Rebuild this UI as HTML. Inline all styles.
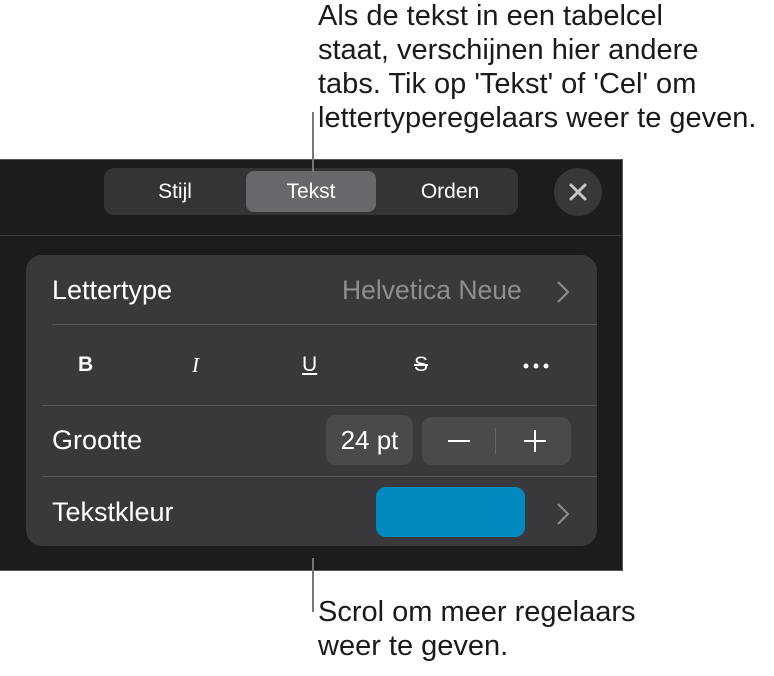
<!DOCTYPE html>
<html><head><style>
body{margin:0;width:774px;height:676px;background:#fff;position:relative;font-family:"Liberation Sans",sans-serif;overflow:hidden}
.a{position:absolute}
.call{color:#1a1a1a;font-size:29px;line-height:34px;left:318px;white-space:nowrap}
.panel{left:0;top:159px;width:623px;height:412px;background:#1c1c1e;border-top:1px solid #555;border-right:1px solid #555;border-bottom:1px solid #555;box-sizing:border-box}
.w{color:#fff}
.card{left:26px;top:255px;width:571px;height:291px;background:#39393c;border-radius:16px}
.sep{height:1px;background:#555558}
.lbl{font-size:27px;color:#fff}
</style></head><body>
<div class="a call" style="top:-1px">Als de tekst in een tabelcel<br>staat, verschijnen hier andere<br>tabs. Tik op 'Tekst' of 'Cel' om<br>lettertyperegelaars weer te geven.</div>
<div class="a" style="left:312px;top:112px;width:2px;height:60px;background:#777"></div>
<div class="a panel"></div>
<div class="a" style="left:0;top:235px;width:622px;height:1px;background:#3a3a3c"></div>
<div class="a" style="left:104px;top:168px;width:414px;height:47px;background:#343437;border-radius:10px"></div>
<div class="a" style="left:246px;top:171px;width:130px;height:41px;background:#68686c;border-radius:8px"></div>
<div class="a w" style="left:104px;top:180px;width:142px;text-align:center;font-size:21px">Stijl</div>
<div class="a w" style="left:246px;top:180px;width:130px;text-align:center;font-size:21px">Tekst</div>
<div class="a w" style="left:376px;top:180px;width:148px;text-align:center;font-size:21px">Orden</div>
<div class="a" style="left:312px;top:150px;width:2px;height:22px;background:#777"></div>
<div class="a" style="left:554px;top:168px;width:48px;height:48px;border-radius:50%;background:#38383b"></div>
<svg class="a" style="left:568px;top:182px" width="20" height="20"><path d="M3 3L17 17M17 3L3 17" stroke="#c8c8cc" stroke-width="3" stroke-linecap="round"/></svg>
<div class="a card"></div>
<div class="a lbl" style="left:52px;top:275px">Lettertype</div>
<div class="a" style="left:342px;top:275px;font-size:26.5px;color:#8e8e92">Helvetica Neue</div>
<svg class="a" style="left:556px;top:280px" width="14" height="24"><path d="M2 2L12 12L2 22" stroke="#8e8e92" stroke-width="2" fill="none"/></svg>
<div class="a sep" style="left:52px;top:324px;width:545px"></div>
<div class="a" style="left:78px;top:353px;font-size:21px;font-weight:bold;color:#fff">B</div>
<div class="a" style="left:192px;top:353px;font-size:21px;font-style:italic;color:#fff;font-family:'Liberation Serif',serif">I</div>
<div class="a" style="left:302px;top:353px;font-size:21px;color:#fff;text-decoration:underline">U</div>
<div class="a" style="left:414px;top:353px;font-size:21px;color:#fff;text-decoration:line-through">S</div>
<svg class="a" style="left:522px;top:361px" width="30" height="10"><circle cx="4" cy="5" r="2.5" fill="#fff"/><circle cx="14" cy="5" r="2.5" fill="#fff"/><circle cx="24" cy="5" r="2.5" fill="#fff"/></svg>
<div class="a sep" style="left:42px;top:405px;width:555px"></div>
<div class="a lbl" style="left:52px;top:425px">Grootte</div>
<div class="a" style="left:326px;top:415px;width:87px;height:50px;background:#4a4a4d;border-radius:10px;color:#fff;font-size:26px;text-align:center;line-height:50px">24 pt</div>
<div class="a" style="left:422px;top:417px;width:149px;height:48px;background:#4a4a4d;border-radius:10px"></div>
<div class="a" style="left:495px;top:428px;width:1px;height:26px;background:#666"></div>
<div class="a" style="left:448px;top:440px;width:22px;height:2px;background:#fff"></div>
<div class="a" style="left:524px;top:440px;width:22px;height:2px;background:#fff"></div>
<div class="a" style="left:534px;top:430px;width:2px;height:22px;background:#fff"></div>
<div class="a sep" style="left:42px;top:476px;width:555px"></div>
<div class="a lbl" style="left:52px;top:497px">Tekstkleur</div>
<div class="a" style="left:376px;top:487px;width:149px;height:50px;background:#028abf;border-radius:10px"></div>
<svg class="a" style="left:556px;top:502px" width="14" height="24"><path d="M2 2L12 12L2 22" stroke="#8e8e92" stroke-width="2" fill="none"/></svg>
<div class="a" style="left:312px;top:558px;width:2px;height:54px;background:#777"></div>
<div class="a call" style="top:595px">Scrol om meer regelaars<br>weer te geven.</div>
</body></html>
